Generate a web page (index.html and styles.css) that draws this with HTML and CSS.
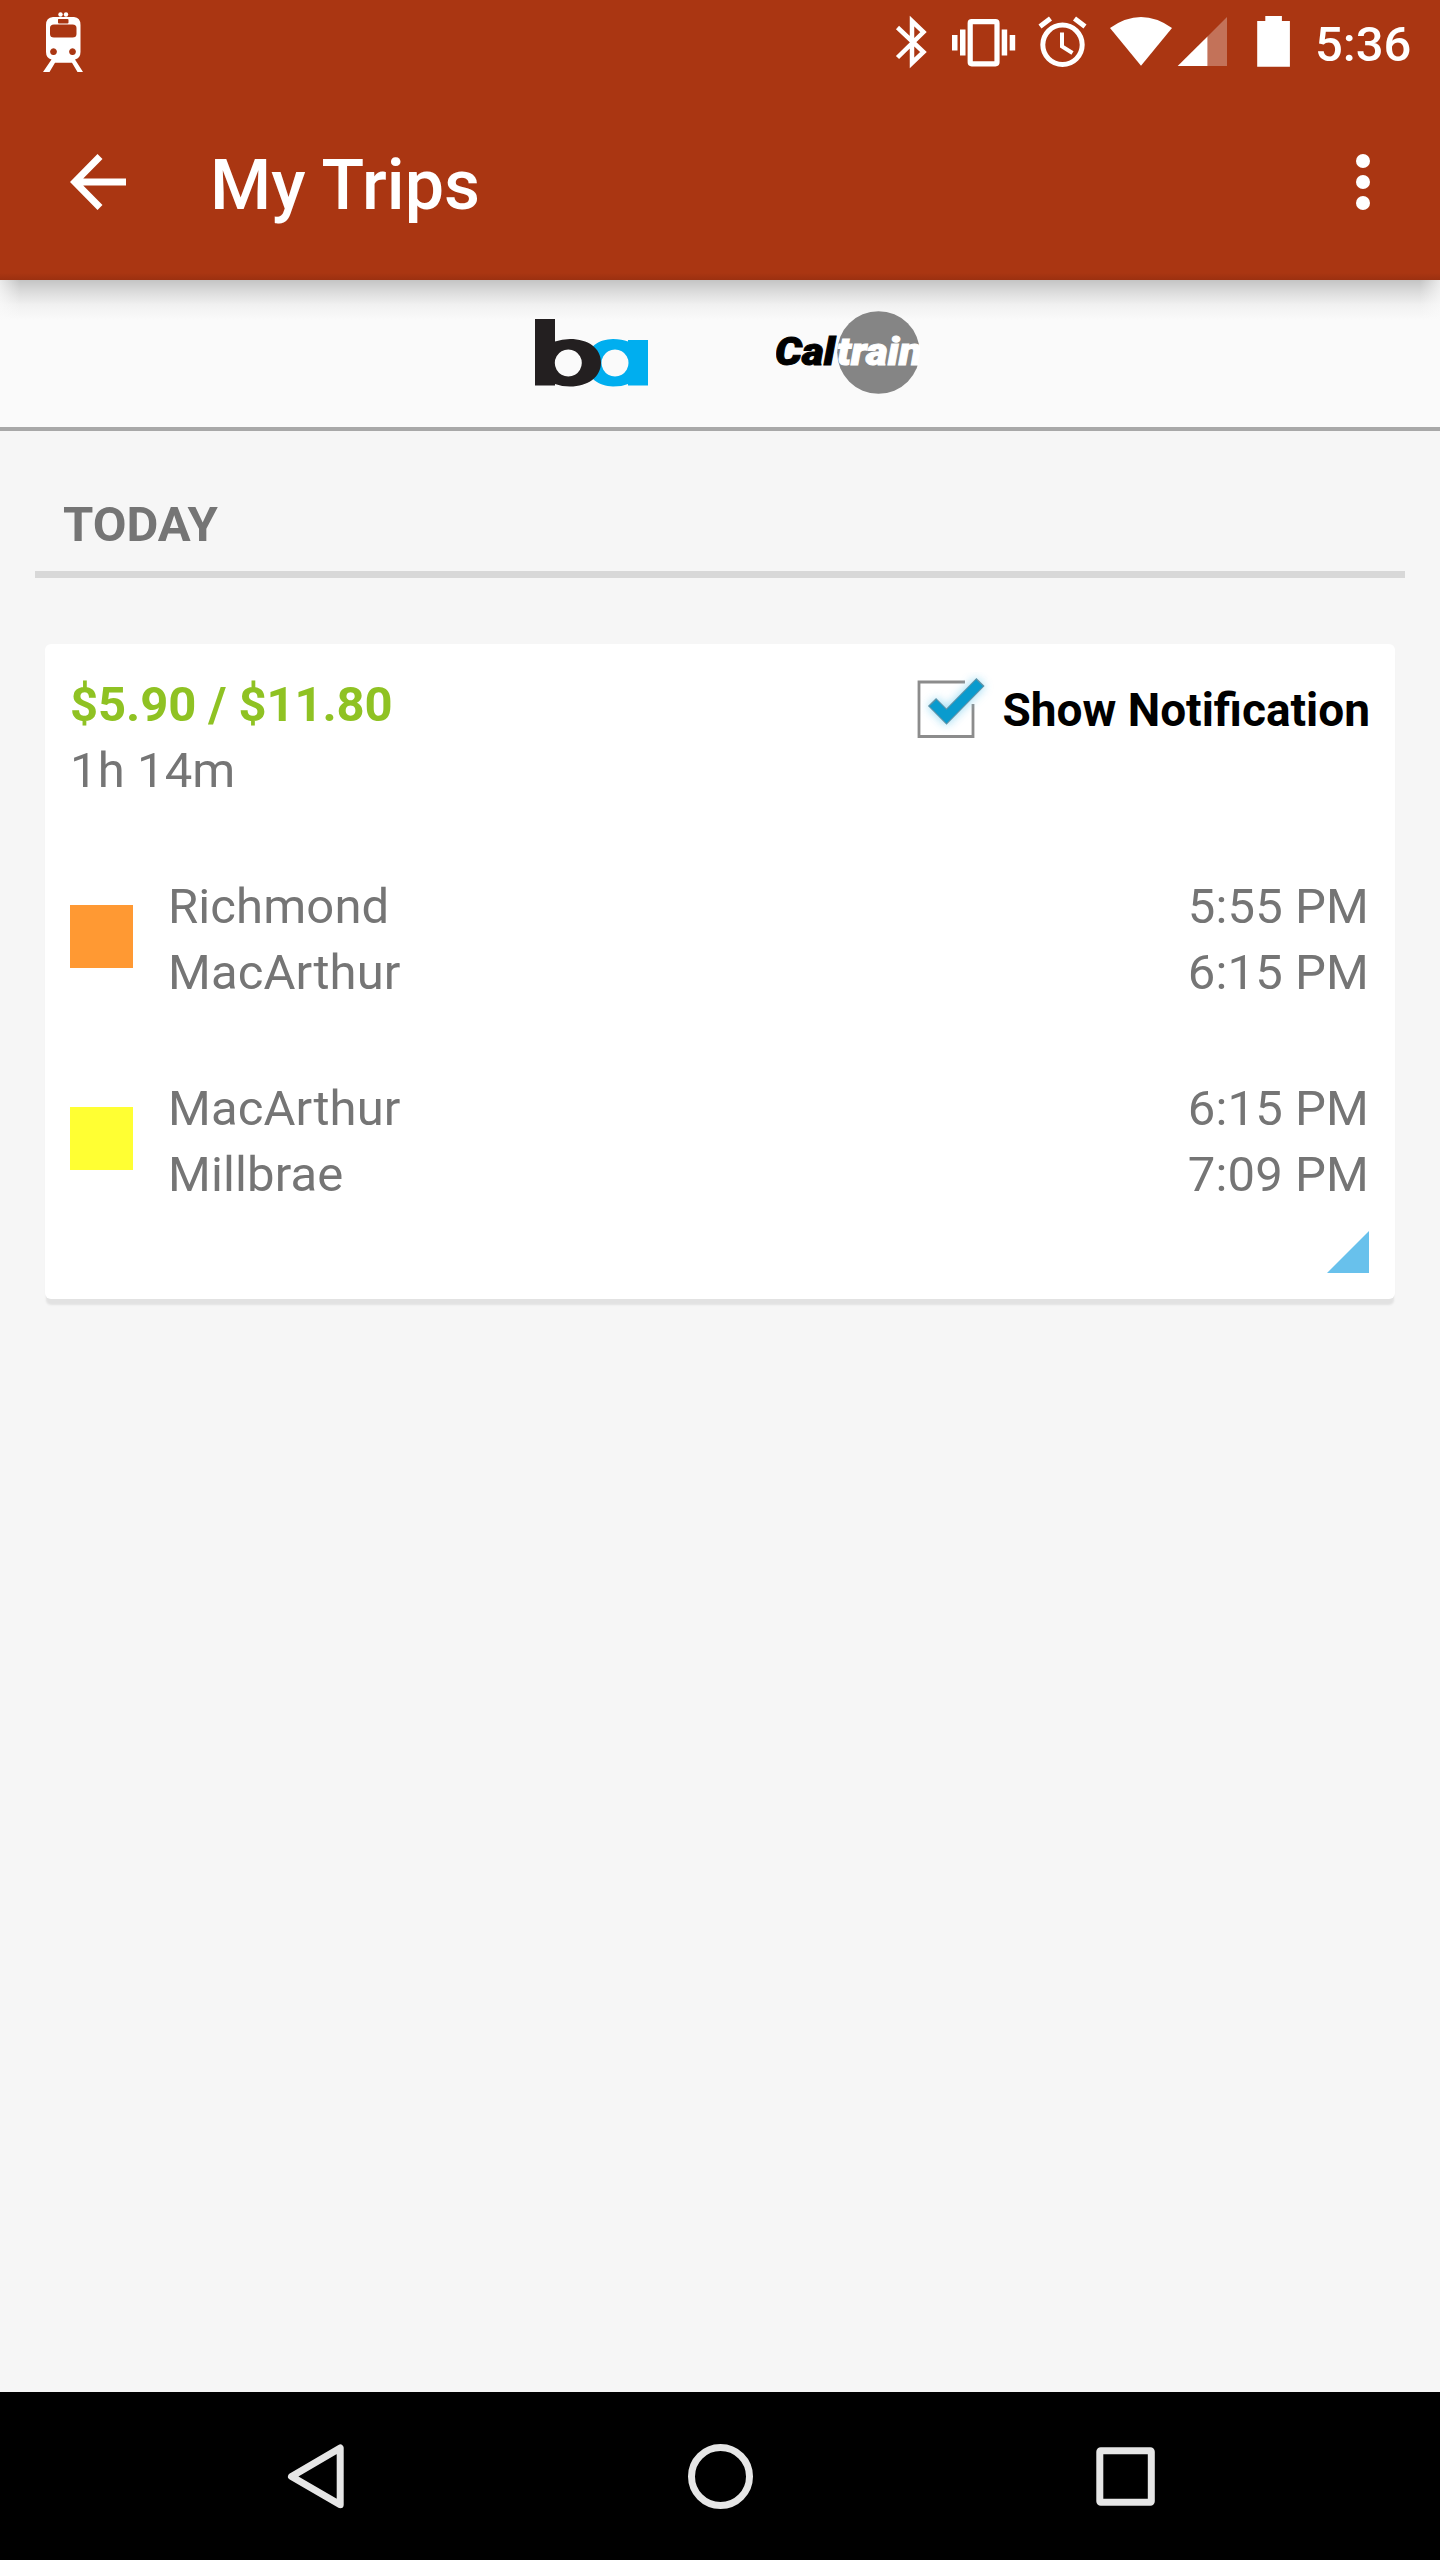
FILE: index.html
```html
<!DOCTYPE html>
<html lang="en">
<head>
<meta charset="utf-8">
<title>My Trips</title>
<link rel="stylesheet" href="styles.css">
</head>
<body>
<header class="top">
  <div class="status">
    <svg class="train" width="40" height="60" viewBox="0 0 40 60" fill="#fff">
      <circle cx="17.5" cy="2.5" r="2.2"/><circle cx="23" cy="2.5" r="2.2"/>
      <path fill-rule="evenodd" d="M10 5H31Q37.500 5.500 37.500 13V40Q37.500 46 32 47.500L40 60H34.500L29 50.800H12L6.500 60H0L8.500 47.500Q3 46 3 40V13Q3 5.500 10 5ZM15.500 7Q15 7 15 8V10.500Q15 11.500 16 11.500H24.500Q25.500 11.500 25.500 10.500V8Q25.500 7 24.500 7ZM11 12.500Q7 12.500 7 16V22Q7 25.500 11 25.500H29.500Q33.500 25.500 33.500 22V16Q33.500 12.500 29.500 12.500ZM10.500 36.300a3.400 3.400 0 1 0 .01 0ZM29.500 36.300a3.400 3.400 0 1 0 .01 0Z"/>
    </svg>
    <svg class="indicators" width="420" height="60" viewBox="890 10 420 60">
      <path d="M897.500 27.500L923.500 52L912 63V21L923.500 32L897.500 57.500" fill="none" stroke="#fff" stroke-width="4.500"/>
      <g fill="#fff"><path d="M952 35h5.500v15.500h-5.500zM960 29.500h5.500v26h-5.500zM1001.700 29.500h5.500v26h-5.500zM1009.700 35h5.500v15.500h-5.500z"/></g>
      <rect x="970.200" y="21.700" width="26.800" height="42.100" rx="1.500" fill="none" stroke="#fff" stroke-width="5.200"/>
      <g fill="none" stroke="#fff" stroke-width="5"><circle cx="1062.500" cy="44.800" r="19.700"/><path d="M1040 26.500L1050.500 18.500M1085 26.500L1074.500 18.500"/><path d="M1062 32.500V46.500L1072.500 53" stroke-width="4"/></g>
      <g fill="#fff"><path d="M1110 28Q1141 6 1172 28L1141 65.700Z"/><path d="M1177.700 66L1207.500 36.500V66Z"/><path opacity=".3" d="M1207.500 36.500L1227 17V66H1207.500Z"/><path d="M1265.300 16h16.600v5h8v45.700h-32.700V21h8.100z"/></g>
    </svg>
    <span class="clock">5:36</span>
  </div>
  <div class="bar">
    <svg width="56" height="56" viewBox="0 0 56 56"><path d="M56 28H8M30 2.500L4.800 28L30 53.500" fill="none" stroke="#fff" stroke-width="7"/></svg>
    <h1 class="title">My Trips</h1>
    <svg class="more" width="14" height="56" viewBox="0 0 14 56" fill="#fff"><circle cx="7" cy="7" r="7"/><circle cx="7" cy="28" r="7"/><circle cx="7" cy="49" r="7"/></svg>
  </div>
</header>
<nav class="agencies">
  <svg width="113" height="68" viewBox="0 0 113 68">
    <path fill="#00aeef" fill-rule="evenodd" d="M78 20Q87 20 93 22.500V21H113V66.500H93V65Q87 67.500 78 67.500C64 67 52 60 52 43.500S64 20.500 78 20ZM80 30.500a13.500 13.500 0 1 0 .01 0Z"/>
    <path fill="#231f20" fill-rule="evenodd" d="M0 0H20V22.500Q27 20 35 20C53 20 66 29 66 43.500S53 67.500 35 67.500Q27 67.500 20 65V66.500H0ZM33.300 30.500a13.500 13.500 0 1 0 .01 0Z"/>
  </svg>
  <svg width="144" height="83" viewBox="0 0 144 83">
    <circle cx="102.500" cy="41.500" r="41.300" fill="#858585"/>
    <g class="wordmark"><text x="-1" y="53.500" textLength="60" lengthAdjust="spacingAndGlyphs" fill="#000" stroke="#000">Cal</text><text x="61" y="53.500" textLength="85" lengthAdjust="spacingAndGlyphs" fill="#fff" stroke="#fff">train</text></g>
  </svg>
</nav>
<main class="content">
  <h2 class="day">TODAY</h2>
  <article class="card">
    <div class="summary">
      <div><div class="fare">$5.90 / $11.80</div><div>1h 14m</div></div>
      <div class="notify">
        <svg width="80" height="76" viewBox="0 0 80 76">
          <defs><filter id="glow" x="-50%" y="-50%" width="200%" height="200%"><feGaussianBlur stdDeviation="5"/></filter></defs>
          <path d="M49 10H3V64.500H57V32" fill="none" stroke="#8c8c8c" stroke-width="2.800"/>
          <path d="M16 30L30.500 44.500L64.500 10" fill="none" stroke="#7fd0f0" stroke-width="13" opacity=".75" filter="url(#glow)"/>
          <path d="M16 30L30.500 44.500L64.500 10" fill="none" stroke="#5f93a8" stroke-width="11.500"/>
          <path d="M17 31L30.500 44.500L63.500 11" fill="none" stroke="#0a9bce" stroke-width="9.500"/>
        </svg>
        <span>Show Notification</span>
      </div>
    </div>
    <div class="leg"><i class="swatch orange"></i><div>Richmond<br>MacArthur</div><div class="times">5:55 PM<br>6:15 PM</div></div>
    <div class="leg"><i class="swatch yellow"></i><div>MacArthur<br>Millbrae</div><div class="times">6:15 PM<br>7:09 PM</div></div>
    <svg class="corner" width="42" height="42" viewBox="0 0 42 42"><path d="M42 0V42H0Z" fill="#68c1ec"/></svg>
  </article>
</main>
<footer class="navbar">
  <svg width="66" height="66" viewBox="0 0 66 66"><path d="M58.200 5V61.800L9.500 33.400Z"/></svg>
  <svg width="66" height="66" viewBox="0 0 66 66"><circle cx="33.500" cy="33.500" r="29"/></svg>
  <svg width="66" height="66" viewBox="0 0 66 66"><rect x="7.800" y="7.800" width="51.500" height="51.500" rx="1"/></svg>
</footer>
</body>
</html>
```
FILE: styles.css
```css
* { box-sizing: border-box; }
body {
  margin: 0;
  width: 1440px;
  height: 2560px;
  display: flex;
  flex-direction: column;
  background: #f6f6f6;
  color: #757575;
  font: 400 49px/66px Roboto, sans-serif;
}
svg { display: block; flex: none; }
h1, h2 { margin: 0; }

.top {
  height: 280px;
  background: linear-gradient(#aa3612 273px, #9b3010 280px);
  color: #fff;
}
.status { height: 84px; display: flex; padding-left: 43px; }
.train { margin-top: 12px; }
.indicators { margin: 10px 0 0 807px; }
.clock { margin: 12px 0 0 5px; font-weight: 500; }
.bar { height: 196px; display: flex; padding: 70px 70px 0; }
.title { margin: -10px 0 0 84px; font-size: 70px; line-height: 82px; font-weight: 500; letter-spacing: .1px; }
.more { margin-left: auto; }

.agencies {
  height: 151px;
  display: flex;
  justify-content: center;
  gap: 128px;
  padding: 31px 0 0 14px;
  background:
    linear-gradient(90deg, rgba(250, 250, 250, .7), rgba(250, 250, 250, 0) 20px, rgba(250, 250, 250, 0) 1420px, rgba(250, 250, 250, .7)),
    linear-gradient(#c4c4c4, #dcdcdc 12px, #f1f1f1 25px, #fafafa 40px);
  border-bottom: 4px solid #a8a8a8;
}
.agencies svg:first-child { margin-top: 8px; }
.wordmark text { font: italic 900 38px Roboto, sans-serif; stroke-width: 1; }

.content { flex: 1; padding: 61px 35px 0; }
.day {
  height: 86px;
  padding-left: 28px;
  font-size: 49px;
  border-bottom: 7px solid #d8d8d8;
}
.card {
  height: 655px;
  margin: 66px 10px 0;
  padding: 28px 25px 0;
  display: flex;
  flex-direction: column;
  gap: 70px;
  background: #fff;
  border-radius: 6px;
  box-shadow: 0 7px 2px -1px #e2e2e2;
  letter-spacing: .12px;
}
.summary { height: 132px; display: flex; justify-content: space-between; }
.fare { color: #8fc223; font-weight: 700; letter-spacing: -.1px; }
.notify { display: flex; color: #000; font-size: 46px; font-weight: 700; letter-spacing: 0; gap: 6px; }
.notify span { padding-top: 5px; }
.leg { height: 132px; display: flex; }
.swatch { width: 63px; height: 63px; margin: 31px 35px 0 0; }
.orange { background: #ff9933; }
.yellow { background: #ffff33; }
.times { margin: 0 1px 0 auto; text-align: right; }
.corner { align-self: flex-end; margin: -47px 1.5px 0 0; }

.navbar {
  height: 168px;
  display: flex;
  justify-content: center;
  gap: 339px;
  padding-top: 51px;
  background: #000;
}
.navbar svg { fill: none; stroke: #e6e6e6; stroke-width: 7; stroke-linejoin: round; }
```
